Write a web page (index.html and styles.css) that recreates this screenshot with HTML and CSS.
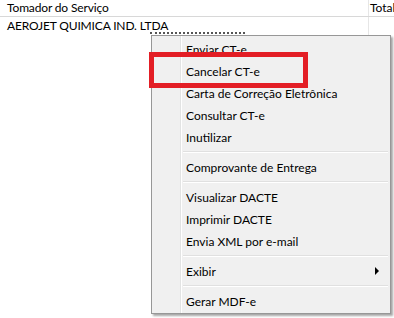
FILE: index.html
```html
<!DOCTYPE html>
<html lang="en">
<head>
    <meta charset="UTF-8">
    <title>Conhecimentos</title>
    <link rel="stylesheet" href="styles.css">
</head>
<body>

<div class="grid">
    <div class="grid-header">
        <div class="col-name">Tomador do Serviço</div>
        <div class="col-total">Total</div>
    </div>
    <div class="grid-row">
        <div class="col-name">AEROJET QUIMICA IND. LTDA</div>
        <div class="col-total"></div>
    </div>
</div>

<div class="cursor-trail"></div>

<!-- Context menu -->
<div class="context-menu">
    <div class="menu-item">Enviar CT-e</div>
    <div class="menu-item">Cancelar CT-e</div>
    <div class="menu-item">Carta de Correção Eletrônica</div>
    <div class="menu-item">Consultar CT-e</div>
    <div class="menu-item">Inutilizar</div>
    <div class="menu-separator"></div>
    <div class="menu-item">Comprovante de Entrega</div>
    <div class="menu-separator"></div>
    <div class="menu-item">Visualizar DACTE</div>
    <div class="menu-item">Imprimir DACTE</div>
    <div class="menu-item">Envia XML por e-mail</div>
    <div class="menu-separator"></div>
    <div class="menu-item has-submenu">Exibir<span class="submenu-arrow"></span></div>
    <div class="menu-separator"></div>
    <div class="menu-item">Gerar MDF-e</div>
</div>

<!-- Highlight around the chosen option -->
<div class="highlight-box"></div>

</body>
</html>
```

FILE: styles.css
```css
* {
    box-sizing: border-box;
}

body {
    margin: 0;
    background-color: #ffffff;
    font-family: Lato, "Open Sans", sans-serif;
    font-size: 12px;
    color: #000000;
}

/* The grid behind the menu */
.grid-header, .grid-row {
    display: flex;
}

.grid-header {
    height: 17px;
    border-bottom: 1px solid #d8d8d8;
}

.grid-row {
    height: 18px;
}

.col-name {
    width: 369px;
    padding-left: 7px;
    border-right: 1px solid #e6e6e6;
    line-height: 16px;
    letter-spacing: -0.15px;
    white-space: nowrap;
}

.grid-row .col-name {
    line-height: 18px;
}

.col-total {
    flex: 1;
    padding-left: 1px;
    line-height: 16px;
    white-space: nowrap;
    overflow: hidden;
}

/* bits of text left by the mouse, over the row */
.cursor-trail {
    position: absolute;
    left: 150px;
    top: 32px;
    width: 95px;
    height: 3px;
    border-top: 2px dotted #555555;
}

/* The popup menu */
.context-menu {
    position: absolute;
    left: 151px;
    top: 35px;
    width: 240px;
    padding: 2px 2px 1px 2px;
    border: 1px solid #979797;
    background-color: #f0f0f0;
    background-image: linear-gradient(to right, transparent 28px, #e2e3e3 28px, #e2e3e3 29px, #ffffff 29px, #ffffff 30px, transparent 30px);
    box-shadow: 2px 2px 2px rgba(0, 0, 0, 0.35);
}

.menu-item {
    display: flex;
    justify-content: space-between;
    align-items: center;
    height: 22px;
    padding-left: 32px;
    padding-right: 9px;
    white-space: nowrap;
}

.submenu-arrow {
    width: 0;
    height: 0;
    border-top: 4px solid transparent;
    border-bottom: 4px solid transparent;
    border-left: 4px solid #000000;
}

.menu-separator {
    height: 8px;
    margin-left: 29px;
    padding-top: 3px;
}

.menu-separator::before {
    content: "";
    display: block;
    height: 1px;
    background-color: #e0e0e0;
    border-bottom: 1px solid #ffffff;
    box-sizing: content-box;
}

/* Red box drawn on the screenshot */
.highlight-box {
    position: absolute;
    left: 149px;
    top: 52px;
    width: 159px;
    height: 36px;
    border: 5px solid #e31e25;
}
```
